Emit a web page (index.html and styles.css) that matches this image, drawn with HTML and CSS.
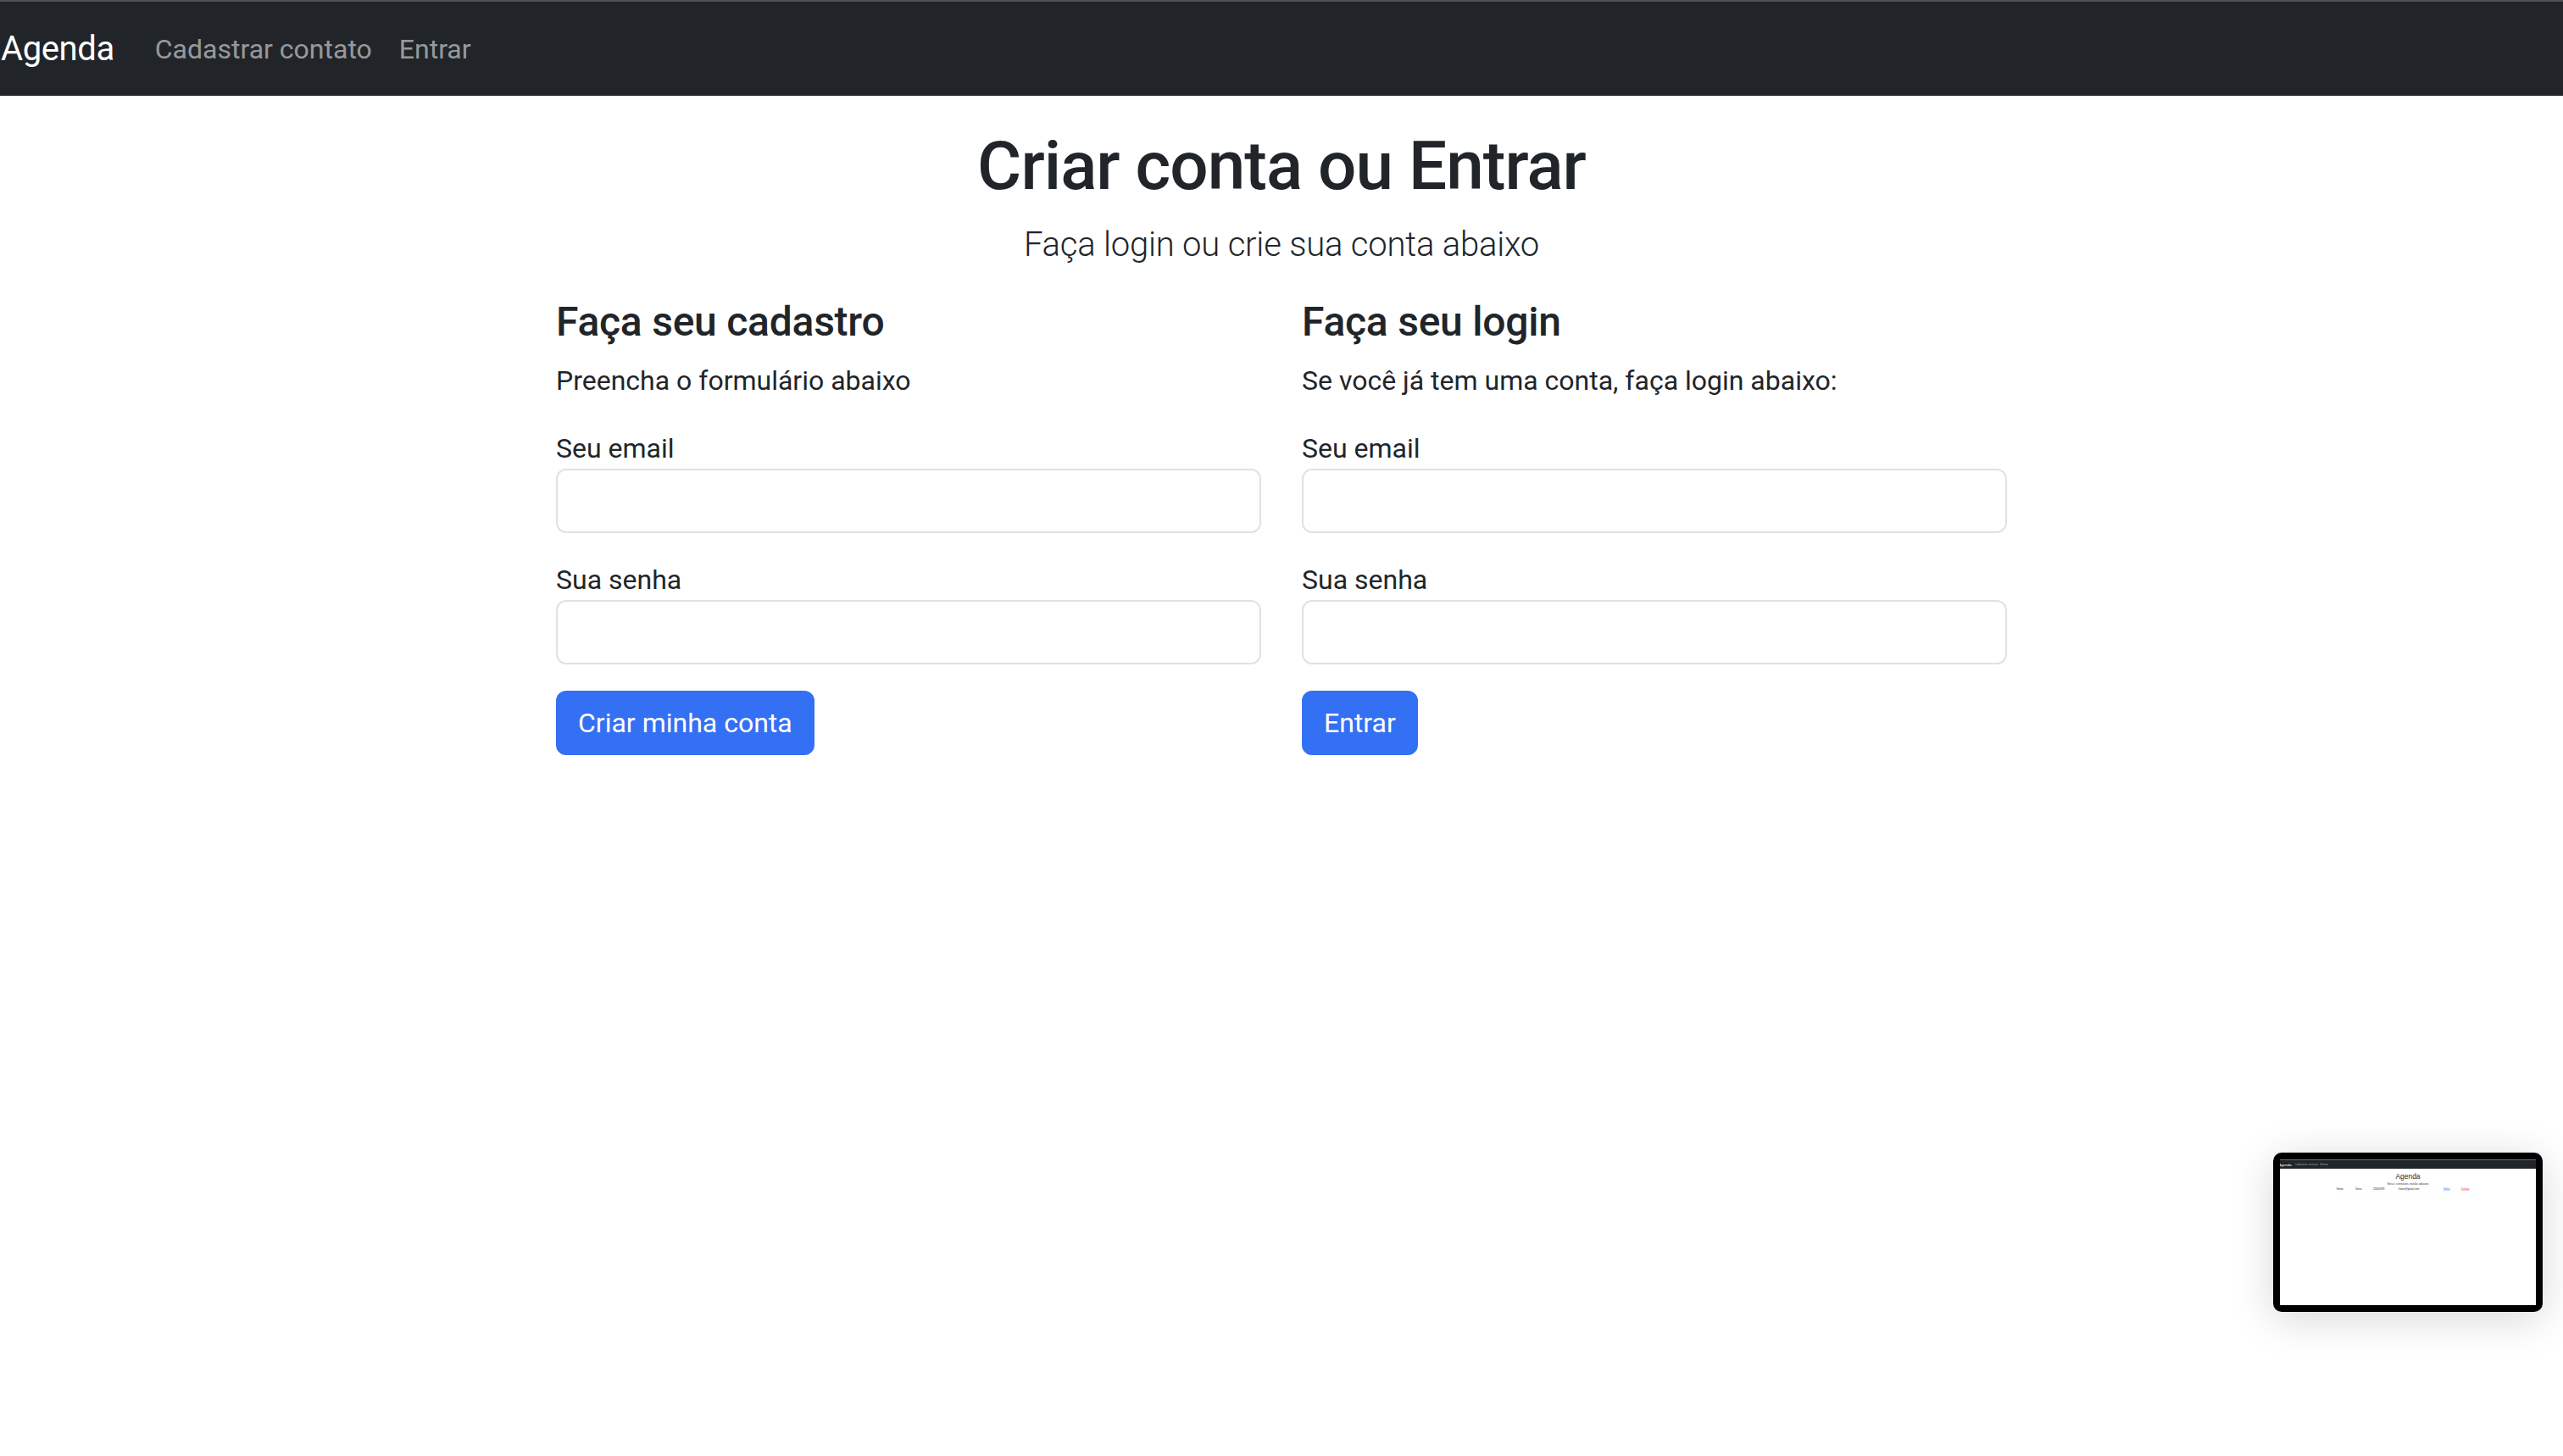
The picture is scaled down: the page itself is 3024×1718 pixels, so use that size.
FILE: index.html
```html
<!DOCTYPE html>
<html lang="pt-BR">
<head>
<meta charset="utf-8">
<title>Agenda - Criar conta ou Entrar</title>
<link rel="stylesheet" href="styles.css">
</head>
<body>
<nav class="navbar">
  <a class="brand" href="#">Agenda</a>
  <ul class="nav">
    <li><a class="nav-link" href="#">Cadastrar contato</a></li>
    <li><a class="nav-link" href="#">Entrar</a></li>
  </ul>
</nav>

<main class="container">
  <h1 class="title">Criar conta ou Entrar</h1>
  <p class="lead">Faça login ou crie sua conta abaixo</p>

  <div class="row">
    <section class="col">
      <h4 class="col-title">Faça seu cadastro</h4>
      <p class="col-text">Preencha o formulário abaixo</p>
      <form class="form">
        <div class="field">
          <label class="label">Seu email</label>
          <input class="input" type="email">
        </div>
        <div class="field">
          <label class="label">Sua senha</label>
          <input class="input" type="password">
        </div>
        <button class="btn" type="button">Criar minha conta</button>
      </form>
    </section>

    <section class="col">
      <h4 class="col-title">Faça seu login</h4>
      <p class="col-text">Se você já tem uma conta, faça login abaixo:</p>
      <form class="form">
        <div class="field">
          <label class="label">Seu email</label>
          <input class="input" type="email">
        </div>
        <div class="field">
          <label class="label">Sua senha</label>
          <input class="input" type="password">
        </div>
        <button class="btn" type="button">Entrar</button>
      </form>
    </section>
  </div>
</main>

<div class="thumb">
  <div class="thumb-screen">
    <div class="mini">
      <div class="mini-nav">
        <span class="mini-brand">Agenda</span>
        <span class="mini-link">Cadastrar contato</span>
        <span class="mini-link">Entrar</span>
      </div>
      <div class="mini-title">Agenda</div>
      <div class="mini-lead">Seus contatos estão abaixo</div>
      <div class="mini-row">
        <span class="mini-cell c1">Heitor</span>
        <span class="mini-cell c2">Vieira</span>
        <span class="mini-cell c3">23456789</span>
        <span class="mini-cell c4">heitor@gmail.com</span>
        <span class="mini-cell c5 edit">Editar</span>
        <span class="mini-cell c6 del">Deletar</span>
      </div>
    </div>
  </div>
</div>
</body>
</html>
```

FILE: styles.css
```css
* { box-sizing: border-box; }

html, body {
  margin: 0;
  padding: 0;
  background: #ffffff;
}

body {
  font-family: Roboto, Inter, "Noto Sans", "Liberation Sans", sans-serif;
  font-size: 32px;
  line-height: 1.5;
  color: #212529;
  min-height: 1718px;
  position: relative;
}

/* ---------- navbar ---------- */
.navbar {
  display: flex;
  align-items: center;
  background: #212529;
  border-top: 2px solid #4b5056;
  padding: 16px 0 15px 0;
}

.brand {
  font-size: 40px;
  line-height: 60px;
  padding: 10px 0 10px 1px;
  margin-right: 32px;
  color: #ffffff;
  text-decoration: none;
  letter-spacing: -0.01em;
}

.nav {
  display: flex;
  list-style: none;
  margin: 0;
  padding: 0;
}

.nav-link {
  display: block;
  font-size: 32px;
  line-height: 48px;
  padding: 16px 16px;
  color: rgba(255, 255, 255, 0.55);
  text-decoration: none;
}

/* ---------- main ---------- */
.container {
  width: 1760px;
  margin: 0 auto;
  padding: 35px 24px 0 24px;
}

.title {
  margin: 0 0 15px 0;
  font-size: 80px;
  line-height: 96px;
  font-weight: 500;
  text-align: center;
  letter-spacing: -0.012em;
}

.lead {
  margin: 0 0 32px 0;
  font-size: 40px;
  line-height: 60px;
  font-weight: 300;
  text-align: center;
  letter-spacing: -0.005em;
}

.row {
  display: grid;
  grid-template-columns: 1fr 1fr;
  column-gap: 48px;
}

.col-title {
  margin: 0 0 16px 0;
  font-size: 48px;
  line-height: 57.6px;
  font-weight: 500;
  letter-spacing: -0.005em;
}

.col-text {
  margin: 0 0 32px 0;
  font-size: 32px;
  line-height: 48px;
}

.field {
  margin-bottom: 31px;
}

.label {
  display: block;
  font-size: 32px;
  line-height: 48px;
  margin-bottom: 0;
}

.input {
  display: block;
  width: 100%;
  height: 76px;
  padding: 12px 24px;
  font: inherit;
  border: 2px solid #dee2e6;
  border-radius: 12px;
  background: #ffffff;
}

.btn {
  display: inline-block;
  font-family: inherit;
  font-size: 32px;
  line-height: 48px;
  padding: 12px 24px;
  color: #ffffff;
  background: #3470f4;
  border: 2px solid #3470f4;
  border-radius: 12px;
}

/* ---------- screenshot thumbnail overlay ---------- */
.thumb {
  position: absolute;
  right: 24px;
  bottom: 170px;
  width: 318px;
  height: 188px;
  padding: 8px;
  background: #000000;
  border-radius: 10px;
  box-shadow: 0 8px 50px rgba(0, 0, 0, 0.16);
}

.thumb-screen {
  width: 302px;
  height: 172px;
  background: #ffffff;
  overflow: hidden;
}

.mini {
  width: 3020px;
  height: 1720px;
  transform: scale(0.1);
  transform-origin: top left;
  font-family: "Liberation Sans", Arial, sans-serif;
  color: #212529;
}

.mini-nav {
  display: flex;
  align-items: center;
  height: 110px;
  background: #212529;
  border-top: 10px solid #6a6e73;
}

.mini-brand {
  font-size: 44px;
  color: #ffffff;
  margin-left: -14px;
  margin-right: 40px;
}

.mini-link {
  font-size: 34px;
  color: rgba(255, 255, 255, 0.55);
  margin-right: 28px;
}

.mini-title {
  margin-top: 40px;
  font-size: 84px;
  line-height: 100px;
  text-align: center;
}

.mini-lead {
  margin-top: 2px;
  font-size: 40px;
  line-height: 60px;
  text-align: center;
  color: #3a3f44;
}

.mini-row {
  position: relative;
  margin: 12px 0 0 660px;
  width: 1710px;
  height: 60px;
  border-bottom: 3px solid #f0f1f2;
}

.mini-cell {
  position: absolute;
  top: 8px;
  font-size: 30px;
  line-height: 40px;
}

.c1 { left: 10px; }
.c2 { left: 230px; }
.c3 { left: 440px; }
.c4 { left: 740px; }
.c5 { left: 1270px; }
.c6 { left: 1480px; }

.edit { color: #3470f4; text-decoration: underline; }
.del { color: #dc3545; text-decoration: underline; }
```
